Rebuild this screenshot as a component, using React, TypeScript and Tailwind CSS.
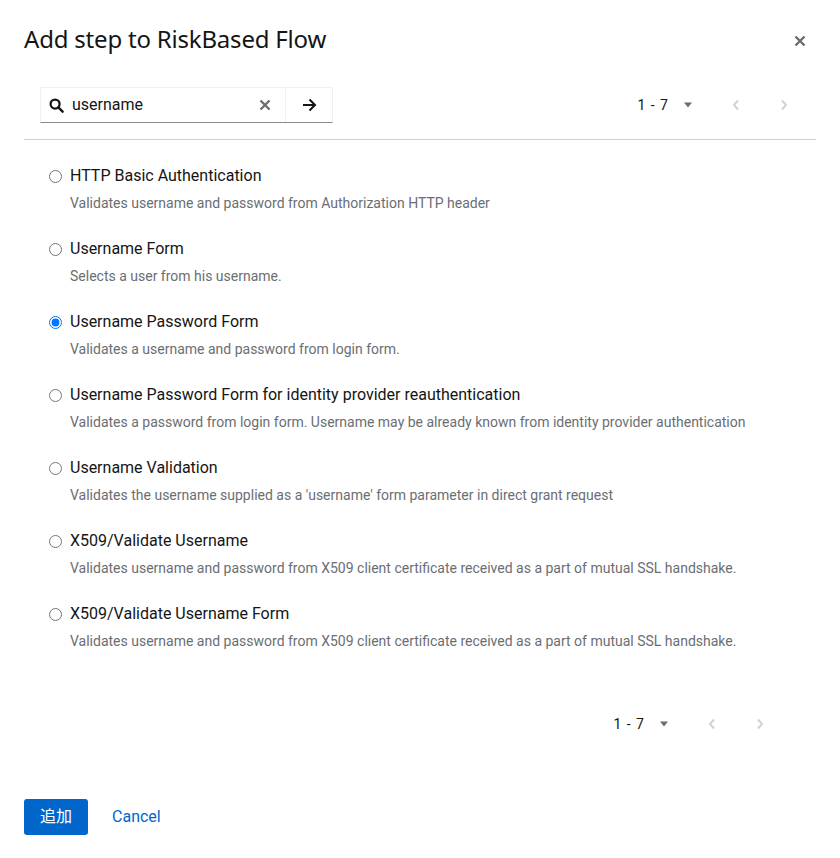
import { useState } from "react";

const steps = [
  {
    name: "HTTP Basic Authentication",
    help: "Validates username and password from Authorization HTTP header",
  },
  { name: "Username Form", help: "Selects a user from his username." },
  {
    name: "Username Password Form",
    help: "Validates a username and password from login form.",
  },
  {
    name: "Username Password Form for identity provider reauthentication",
    help: "Validates a password from login form. Username may be already known from identity provider authentication",
  },
  {
    name: "Username Validation",
    help: "Validates the username supplied as a 'username' form parameter in direct grant request",
  },
  {
    name: "X509/Validate Username",
    help: "Validates username and password from X509 client certificate received as a part of mutual SSL handshake.",
  },
  {
    name: "X509/Validate Username Form",
    help: "Validates username and password from X509 client certificate received as a part of mutual SSL handshake.",
  },
];

const Pager = () => (
  <div className="flex items-center h-9 text-sm text-[#151515]">
    <span className="flex items-center gap-[14px] pr-[19px]">
      <span className="ml-[2px] tracking-[1px]">1 - 7</span>
      <svg width="10" height="6" viewBox="0 0 10 6">
        <path d="M1 0.5h8L5 5.5z" fill="#6a6e73" />
      </svg>
    </span>
    <button className="w-12 h-9 flex items-center justify-center text-[#d2d2d2]">
      <svg width="8" height="12" viewBox="0 0 8 12">
        <path d="M6 1.5L2 6l4 4.5" stroke="currentColor" strokeWidth="2" fill="none" />
      </svg>
    </button>
    <button className="w-12 h-9 flex items-center justify-center text-[#d2d2d2]">
      <svg width="8" height="12" viewBox="0 0 8 12">
        <path d="M2 1.5L6 6l-4 4.5" stroke="currentColor" strokeWidth="2" fill="none" />
      </svg>
    </button>
  </div>
);

export default function App() {
  const [selected, setSelected] = useState(2);
  return (
    <div
      className="w-[840px] h-[858px] bg-white px-6 pt-6 text-[#151515] flex flex-col"
      style={{ fontFamily: 'Roboto, "Noto Sans CJK JP", sans-serif' }}
    >
      <header className="flex items-start justify-between">
        <h1
          className="text-2xl leading-[30px] tracking-[-0.2px]"
          style={{ fontFamily: '"Noto Sans", sans-serif' }}
        >
          Add step to RiskBased Flow
        </h1>
        <button className="w-8 h-8 mt-[1px] flex items-center justify-center text-[#6a6e73]">
          <svg width="12" height="12" viewBox="0 0 12 12">
            <path d="M1.5 1.5l9 9M10.5 1.5l-9 9" stroke="currentColor" strokeWidth="2.4" />
          </svg>
        </button>
      </header>

      <div className="mt-[30px] pl-4 pr-2 pb-4 border-b border-[#d2d2d2] flex items-center justify-between">
        <div className="flex w-[293px] h-9 border border-[#f0f0f0] border-b-[#8a8d90]">
          <div className="flex-1 flex items-center pl-2 pr-2 gap-[8px]">
            <svg width="15" height="15" viewBox="0 0 16 16">
              <circle cx="6.5" cy="6.5" r="4.8" stroke="#151515" strokeWidth="2.4" fill="none" />
              <path d="M10 10l4.5 4.5" stroke="#151515" strokeWidth="2.6" strokeLinecap="round" />
            </svg>
            <span className="flex-1 text-base">username</span>
            <svg width="12" height="12" viewBox="0 0 12 12" className="mr-[6px]">
              <path d="M1.5 1.5l9 9M10.5 1.5l-9 9" stroke="#6a6e73" strokeWidth="2.4" />
            </svg>
          </div>
          <button className="w-[47px] border-l border-[#f0f0f0] flex items-center justify-center">
            <svg width="15" height="14" viewBox="0 0 15 14">
              <path d="M1 7h12M7.5 1.5L13 7l-5.5 5.5" stroke="#151515" strokeWidth="2" fill="none" />
            </svg>
          </button>
        </div>
        <Pager />
      </div>

      <ul className="pt-6 pl-6 flex flex-col gap-[23px]">
        {steps.map((s, i) => (
          <li key={s.name}>
            <label className="flex items-center gap-2 leading-6 text-base">
              <input
                type="radio"
                name="step"
                checked={selected === i}
                onChange={() => setSelected(i)}
                className="m-0 ml-[1px] w-[13px] h-[13px]"
              />
              {s.name}
            </label>
            <p className="mt-[5px] pl-[22px] text-sm leading-[21px] text-[#6a6e73]">{s.help}</p>
          </li>
        ))}
      </ul>

      <div className="mt-[54px] pr-8 flex justify-end">
        <Pager />
      </div>

      <footer className="mt-[57px] flex items-center gap-2">
        <button className="h-9 px-4 rounded-[3px] bg-[#0066cc] text-white text-base">追加</button>
        <button className="h-9 px-4 text-base text-[#0066cc]">Cancel</button>
      </footer>
    </div>
  );
}
